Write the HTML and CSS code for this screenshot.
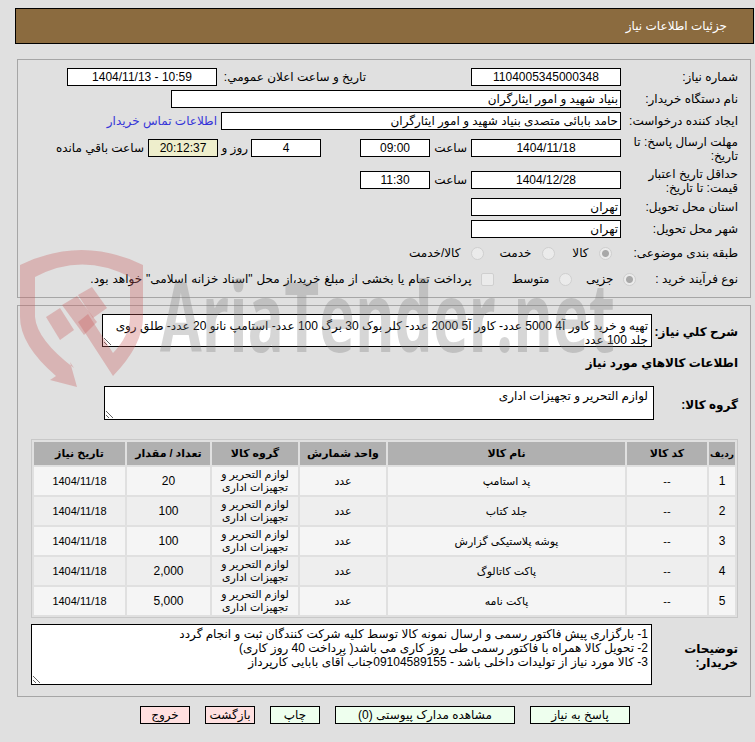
FILE: index.html
```html
<!DOCTYPE html>
<html lang="fa" dir="rtl">
<head>
  <meta charset="UTF-8">
  <title>جزئیات اطلاعات نیاز</title>
  <link rel="stylesheet" href="styles.css">
</head>
<body>

  <!-- Header -->
  <div class="page-title">جزئیات اطلاعات نیاز</div>

  <!-- Main fields -->
  <div class="panel panel-info">
    <div class="row">
      <div class="label">شماره نياز:</div>
      <div class="field w150 center">1104005345000348</div>
      <div class="public-label">تاریخ و ساعت اعلان عمومي:</div>
      <div class="field w150 center">10:59 - 1404/11/13</div>
    </div>
    <div class="row">
      <div class="label">نام دستگاه خریدار:</div>
      <div class="field w450">بنیاد شهید و امور ایثارگران</div>
    </div>
    <div class="row">
      <div class="label">ایجاد کننده درخواست:</div>
      <div class="field w400">حامد بابائی متصدی بنیاد شهید و امور ایثارگران</div>
      <a class="contact" href="#contact">اطلاعات تماس خریدار</a>
    </div>
    <div class="row row-tall">
      <div class="label">مهلت ارسال پاسخ: تا تاریخ:</div>
      <div class="field w150 center">1404/11/18</div>
      <div class="hour-label">ساعت</div>
      <div class="field w70 center">09:00</div>
      <div class="field w70 center days">4</div>
      <div class="days-label">روز و</div>
      <div class="field w70 center timer">20:12:37</div>
      <div class="remain-label">ساعت باقي مانده</div>
    </div>
    <div class="row row-tall">
      <div class="label">حداقل تاریخ اعتبار قیمت: تا تاریخ:</div>
      <div class="field w150 center">1404/12/28</div>
      <div class="hour-label">ساعت</div>
      <div class="field w70 center">11:30</div>
    </div>
    <div class="row">
      <div class="label">استان محل تحویل:</div>
      <div class="field w150">تهران</div>
    </div>
    <div class="row">
      <div class="label">شهر محل تحویل:</div>
      <div class="field w150">تهران</div>
    </div>
    <div class="row row-option">
      <div class="label">طبقه بندی موضوعی:</div>
      <label class="option opt-goods"><input type="radio" name="cat" checked disabled>کالا</label>
      <label class="option opt-service"><input type="radio" name="cat" disabled>خدمت</label>
      <label class="option"><input type="radio" name="cat" disabled>کالا/خدمت</label>
    </div>
    <div class="row row-option row-kind">
      <div class="label label-kind">نوع فرآیند خرید :</div>
      <label class="option opt-small"><input type="radio" name="kind" checked disabled>جزیی</label>
      <label class="option opt-mid"><input type="radio" name="kind" disabled>متوسط</label>
      <label class="option opt-treasury"><input type="checkbox" disabled>پرداخت تمام یا بخشی از مبلغ خرید،از محل "اسناد خزانه اسلامی" خواهد بود.</label>
    </div>
  </div>

  <!-- Goods -->
  <div class="panel panel-goods">
    <div class="row row-desc">
      <div class="label label-short bold">شرح كلي نياز:</div>
      <textarea class="box box-desc" readonly>تهیه و خرید کاور آ4 5000 عدد- کاور آ5 2000 عدد- کلر بوک 30 برگ 100 عدد- استامپ نانو 20 عدد- طلق روی جلد 100 عدد</textarea>
    </div>
    <div class="goods-title">اطلاعات كالاهاي مورد نياز</div>
    <div class="row row-group">
      <div class="label label-group bold">گروه کالا:</div>
      <textarea class="box box-group" readonly>لوازم التحریر و تجهیزات اداری</textarea>
    </div>

    <table class="goods">
      <colgroup>
        <col class="c-index"><col class="c-code"><col class="c-name"><col class="c-unit">
        <col class="c-group"><col class="c-qty"><col class="c-date">
      </colgroup>
      <thead>
        <tr>
          <th class="th-index">ردیف</th><th>کد کالا</th><th>نام کالا</th><th>واحد شمارش</th>
          <th>گروه کالا</th><th>تعداد / مقدار</th><th>تاریخ نیاز</th>
        </tr>
      </thead>
      <tbody>
        <tr>
          <td class="num">1</td><td>--</td><td>پد استامپ</td><td>عدد</td>
          <td>لوازم التحریر و تجهیزات اداری</td><td class="num">20</td><td>1404/11/18</td>
        </tr>
        <tr>
          <td class="num">2</td><td>--</td><td>جلد کتاب</td><td>عدد</td>
          <td>لوازم التحریر و تجهیزات اداری</td><td class="num">100</td><td>1404/11/18</td>
        </tr>
        <tr>
          <td class="num">3</td><td>--</td><td>پوشه پلاستیکی گزارش</td><td>عدد</td>
          <td>لوازم التحریر و تجهیزات اداری</td><td class="num">100</td><td>1404/11/18</td>
        </tr>
        <tr>
          <td class="num">4</td><td>--</td><td>پاکت کاتالوگ</td><td>عدد</td>
          <td>لوازم التحریر و تجهیزات اداری</td><td class="num">2,000</td><td>1404/11/18</td>
        </tr>
        <tr>
          <td class="num">5</td><td>--</td><td>پاکت نامه</td><td>عدد</td>
          <td>لوازم التحریر و تجهیزات اداری</td><td class="num">5,000</td><td>1404/11/18</td>
        </tr>
      </tbody>
    </table>

    <div class="row row-notes">
      <div class="label label-notes bold">توضیحات خریدار:</div>
      <textarea class="box box-notes" readonly>1- بارگزاری پیش فاکتور رسمی و ارسال نمونه کالا توسط کلیه شرکت کنندگان ثبت و انجام گردد
2- تحویل کالا همراه با فاکتور رسمی طی روز کاری می باشد( پرداخت 40 روز کاری)
3- کالا مورد نیاز از تولیدات داخلی باشد - 09104589155جناب آقای بابایی کارپرداز</textarea>
    </div>
  </div>

  <!-- Buttons -->
  <div class="actions">
    <button class="btn btn-green btn-reply">پاسخ به نیاز</button>
    <button class="btn btn-green btn-docs">مشاهده مدارک پیوستی (0)</button>
    <button class="btn btn-green">چاپ</button>
    <button class="btn btn-red">بازگشت</button>
    <button class="btn btn-red">خروج</button>
  </div>

  <!-- Watermark -->
  <svg class="watermark" viewBox="0 0 755 742" aria-hidden="true">
    <g class="wm-shield">
      <path d="M20 265 Q82 235 143 265 L143 317 Q143 345 113 376 L78 322 L88 314 L113 353 Q130 335 130 317 L130 277 Q82 252 35 277 L35 317 Q37 340 74 368 L70 362 L77 387 L50 380 L56 376 Q20 345 20 317 Z"/>
      <path d="M46 317 L60 308 L74 330 L60 340 Z"/>
      <path d="M62 305 L77 296 L97 322 L84 335 Z"/>
      <path d="M78 295 L92 287 L107 308 L93 318 Z"/>
    </g>
    <text class="wm-text" x="160" y="352" textLength="455" lengthAdjust="spacingAndGlyphs">AriaTender.net</text>
  </svg>

</body>
</html>
```

FILE: styles.css
```css
/* General */
html, body {
  margin: 0;
  padding: 0;
  background-color: #e0e0e0;
}

body {
  position: relative;
  width: 755px;
  height: 742px;
  overflow: hidden;
  font-family: "Liberation Sans", "DejaVu Sans", sans-serif;
  font-size: 12px;
  color: #000;
}

/* Header */
.page-title {
  box-sizing: border-box;
  height: 36px;
  margin: 8px 1px 0 15px;
  padding: 0 26px;
  border: 1px solid #000;
  background-color: #8b6b3f;
  color: #fff;
  line-height: 34px;
}

/* Panels */
.panel {
  box-sizing: border-box;
  margin: 0 4px 0 17px;
  border: 1px solid #a6a6a6;
  padding-right: 12px;
}

.panel-info {
  height: 239px;
  margin-top: 15px;
  padding-top: 6px;
}

.panel-goods {
  height: 392px;
  margin-top: 7px;
  padding-top: 8px;
}

/* Rows */
.row {
  display: flex;
  align-items: center;
  height: 22px;
}

.row-tall {
  height: 32px;
}

.row-option {
  height: 26px;
}

.label {
  flex: none;
  width: 110px;
  margin-left: 7px;
  line-height: 14px;
}

.row-tall .label {
  padding-top: 2px;
}

.label-short {
  width: 80px;
  margin-left: 6px;
  padding-top: 3px;
  white-space: nowrap;
}

.label-group {
  width: 80px;
  margin-left: 4px;
  padding-top: 3px;
}

.label-notes {
  width: 70px;
  margin-left: 16px;
  padding-top: 2px;
}

.label-kind {
  width: 96px;
  margin-left: 6.5px;
}

.bold {
  font-weight: bold;
}

/* Fields */
.field {
  flex: none;
  box-sizing: border-box;
  height: 18px;
  padding: 0 2px;
  border: 1px solid #000;
  background-color: #fff;
  line-height: 16px;
  white-space: nowrap;
}

.center {
  text-align: center;
}

.w150 { width: 150px; }
.w70 { width: 70px; }
.w400 { width: 400px; }
.w450 { width: 450px; }

.public-label {
  width: 149px;
  margin-right: 105px;
  white-space: nowrap;
}

.contact {
  margin-right: 4px;
  color: #3535d8;
  text-decoration: none;
  white-space: nowrap;
}

.hour-label {
  width: 37px;
  margin-right: 4px;
}

.days {
  margin-right: 39px;
}

.days-label {
  width: 30px;
  margin-right: 3px;
}

.timer {
  background-color: #eeeecc;
}

.remain-label {
  margin-right: 4px;
  white-space: nowrap;
}

/* Radios */
.option {
  display: flex;
  align-items: center;
  gap: 10px;
  white-space: nowrap;
}

.row-kind .option {
  gap: 9px;
}

.option input {
  appearance: none;
  box-sizing: border-box;
  width: 13px;
  height: 13px;
  margin: 0;
  border: 1px solid #cfcfcf;
  background-color: #ebebeb;
}

.option input[type="radio"] {
  border-radius: 50%;
}

.option input[type="radio"]:checked {
  background: radial-gradient(circle, #a8a8a8 0 3px, #ebebeb 4px);
}

.option input[type="checkbox"] {
  border-radius: 2px;
}

.opt-goods { width: 57px; margin-right: 9.5px; }
.opt-service { width: 71px; }
.opt-small { width: 64px; }
.opt-mid { width: 78px; }
.opt-treasury { word-spacing: 0.6px; }

/* Textareas */
.box {
  box-sizing: border-box;
  flex: none;
  margin: 0;
  padding: 2px 3px;
  border: 1px solid #000;
  border-radius: 0;
  background-color: #fff;
  font-family: inherit;
  font-size: 12px;
  line-height: 14px;
  color: #000;
  outline: none;
  overflow: hidden;
}

.row-desc {
  height: 33px;
}

.box-desc {
  width: 550px;
  height: 33px;
  padding-top: 4px;
}

.goods-title {
  height: 39px;
  font-weight: bold;
  line-height: 32px;
}

.row-group {
  height: 34px;
}

.box-group {
  width: 550px;
  height: 34px;
  padding-right: 5px;
}

.row-notes {
  height: 61px;
  margin-top: 6px;
}

.box-notes {
  width: 621px;
  height: 61px;
}

/* Table */
.goods {
  table-layout: fixed;
  width: 707px;
  margin-top: 19px;
  border: 1px solid #c8c8c8;
  border-spacing: 2px;
  font-size: 11px;
}

.c-index { width: 26px; }
.c-code { width: 80px; }
.c-name { width: 237px; }
.c-unit { width: 86px; }
.c-group { width: 86px; }
.c-qty { width: 83px; }
.c-date { width: 91px; }

.goods th {
  height: 23px;
  padding: 0;
  background-color: #b0b0b0;
  font-size: 11px;
  white-space: nowrap;
}

.goods .th-index {
  font-size: 9px;
}

.goods td {
  height: 28px;
  padding: 0;
  background-color: #f5f5f5;
  text-align: center;
  line-height: 13px;
}

.goods tbody tr:nth-child(even) td {
  background-color: #eeeeee;
}

.goods .num {
  font-size: 12px;
}

/* Buttons */
.actions {
  display: flex;
  gap: 15px;
  margin: 9px 125px 0 0;
}

.btn {
  box-sizing: border-box;
  width: 50px;
  height: 18px;
  padding: 0;
  border: 1px solid #000;
  font-family: inherit;
  font-size: 12px;
  line-height: 16px;
  color: #000;
}

.btn-reply { width: 100px; }
.btn-docs { width: 180px; }
.btn-green { background-color: #eeffee; }
.btn-red { background-color: #ffe0e0; }

/* Watermark */
.watermark {
  position: absolute;
  top: 0;
  left: 0;
  width: 755px;
  height: 742px;
  pointer-events: none;
}

.wm-shield path {
  fill: rgba(200, 90, 90, 0.33);
}

.wm-text {
  direction: ltr;
  font-family: "Open Sans", sans-serif;
  font-size: 96px;
  font-weight: bold;
  fill: rgba(120, 120, 120, 0.3);
}
```
